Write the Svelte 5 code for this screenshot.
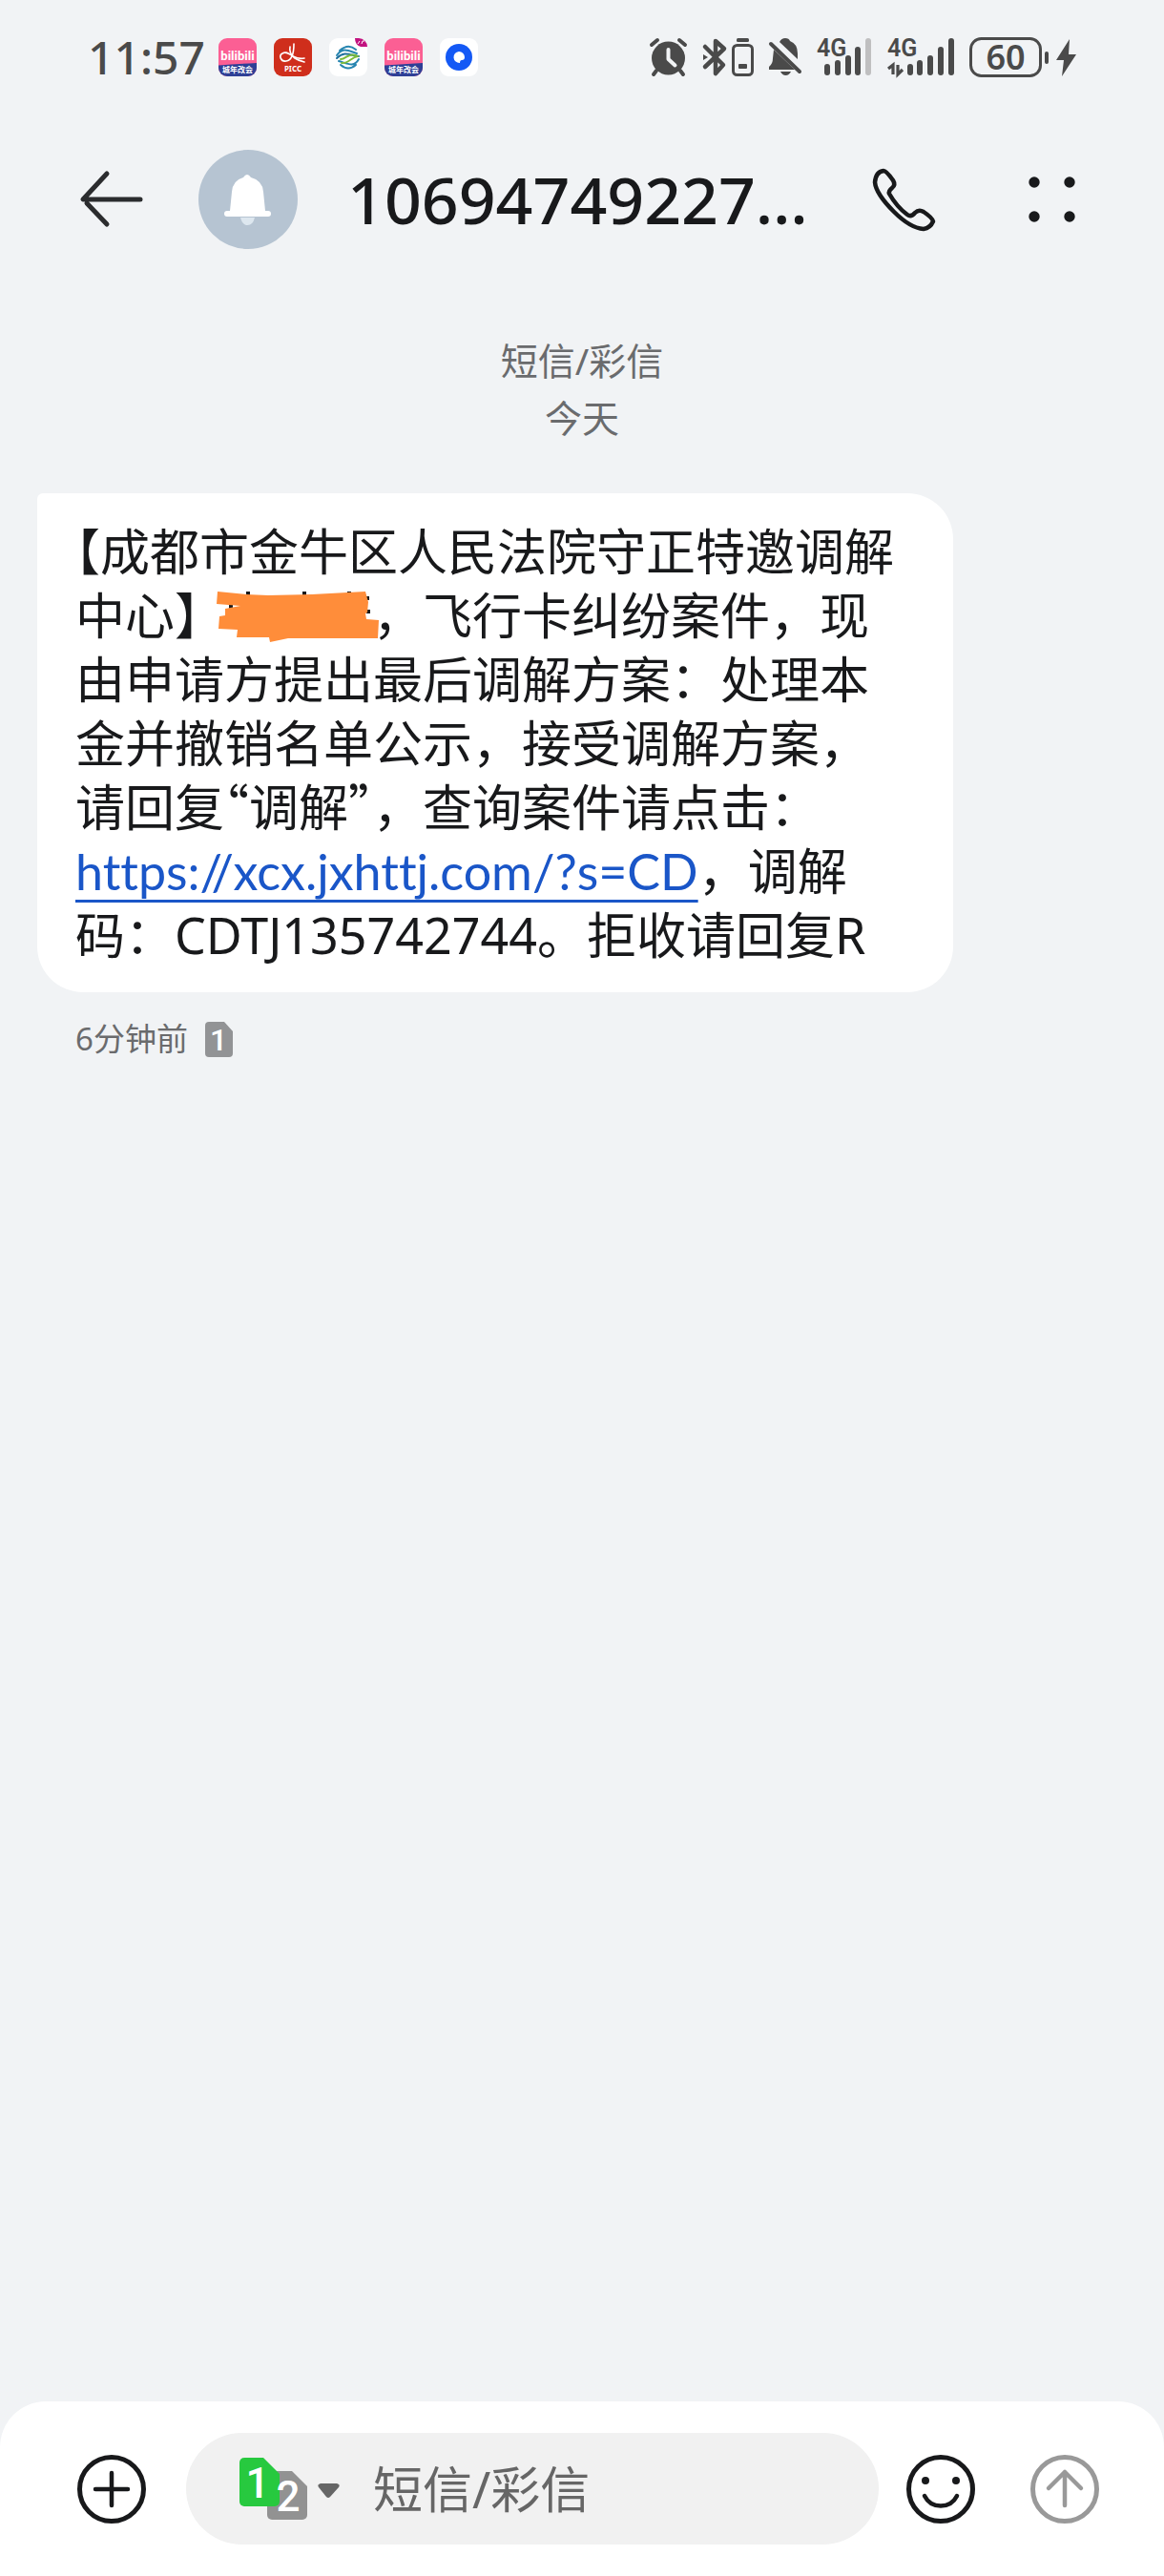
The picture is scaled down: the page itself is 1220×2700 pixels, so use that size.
<script lang="ts">
  interface SimInfo { slot: number }
  let { sender = '10694749227…', link = 'https://xcx.jxhttj.com/?s=CD' }: { sender?: string; link?: string } = $props();

  let draft = $state('');
  const sim: SimInfo = { slot: 1 };

  // left edge, height and opacity of each signal bar
  const signalA = [
    { x: 8, h: 12 }, { x: 19, h: 16 }, { x: 30, h: 21 }, { x: 40, h: 30 }, { x: 51, h: 39, off: true }
  ];
  const signalB = [
    { x: 21, h: 12 }, { x: 31, h: 16 }, { x: 42, h: 21 }, { x: 53, h: 30 }, { x: 64, h: 39 }
  ];
</script>

{#snippet bilibili()}
  <svg width="40" height="40" viewBox="0 0 40 40" aria-hidden="true">
    <rect width="40" height="40" rx="9" fill="#fb5f94" />
    <path d="M0 28.500Q20 27 40 26V31a9 9 0 0 1-9 9H9a9 9 0 0 1-9-9Z" fill="#2e3f96" />
    <text x="20" y="23" text-anchor="middle" class="brand">bilibili</text>
    <text x="20" y="36" text-anchor="middle" class="mini">城年改会</text>
  </svg>
{/snippet}

{#snippet signal(bars: { x: number; h: number; off?: boolean }[], width: number, data: boolean)}
  <svg {width} height="40" viewBox="0 0 {width} 40" aria-hidden="true">
    <text x="0" y="19" class="net">4G</text>
    {#each bars as b (b.x)}
      <rect x={b.x} y={39 - b.h} width="6" height={b.h} rx="3" fill={b.off ? '#bfbfc0' : '#4a4a4a'} />
    {/each}
    {#if data}
      <path d="M6 38V28L1 32M11 28V38L16 33" fill="none" stroke="#4a4a4a" stroke-width="3.200" />
    {/if}
  </svg>
{/snippet}

<div class="screen" lang="zh-CN">
  <div class="status">
    <span class="clock">11:57</span>
    <div class="apps">
      {@render bilibili()}
      <svg width="40" height="40" viewBox="0 0 40 40" aria-hidden="true">
        <rect width="40" height="40" rx="9" fill="#cf2e1c" />
        <g fill="none" stroke="#fff" stroke-width="1.600" stroke-linecap="round">
          <path d="M21 6c0 8-1 17-8 18-6 1-8-6-4-8 4-3 7 1 11 3 4 2 8 3 12 2" />
          <path d="M17 9c-1 5 1 9 5 12 3 2 6 3 10 4" />
        </g>
        <text x="20" y="35" text-anchor="middle" class="mini">PICC</text>
      </svg>
      <svg width="40" height="40" viewBox="0 0 40 40" aria-hidden="true">
        <rect width="40" height="40" rx="9" fill="#fff" />
        <path d="M27 0h4a9 9 0 0 1 9 9H33q-6-2-6-9Z" fill="#c2127f" />
        <path d="M30 6l2-3M34 6l1-3h2" stroke="#fff" stroke-width="1" fill="none" />
        <g fill="none" stroke-width="2" stroke-linecap="round">
          <path d="M11 13Q20 5 28 12M8 18C14 9 20 13 29 16M31 22C26 31 20 27 10 24M28 28Q20 35 12 28" stroke="#2685b0" />
          <path d="M8 21C16 13 22 18 31 19" stroke="#1e6f9c" />
          <path d="M12 22C18 22 20 15 28 18M13 26C20 27 23 20 30 19" stroke="#7cbb3c" />
        </g>
      </svg>
      {@render bilibili()}
      <svg width="40" height="40" viewBox="0 0 40 40" aria-hidden="true">
        <rect width="40" height="40" rx="9" fill="#fff" />
        <circle cx="20" cy="20" r="14" fill="#1459f5" />
        <path d="M20 14a6 6 0 1 0 1 12q0-3 2-3 3 0 3-3a6 6 0 0 0-6-6Z" fill="#fff" />
      </svg>
    </div>

    <div class="system">
      <svg width="41" height="40" viewBox="0 0 41 40" aria-hidden="true">
        <circle cx="20.500" cy="21" r="17.500" fill="#4a4a4a" />
        <path d="M3 7l6-5M38 7l-6-5M8 34l-3 4M33 34l3 4" fill="none" stroke="#4a4a4a" stroke-width="4" stroke-linecap="round" />
        <path d="M20.500 12v10l7 6.500" fill="none" stroke="#f1f3f5" stroke-width="4" stroke-linecap="round" stroke-linejoin="round" />
      </svg>
      <svg width="53" height="40" viewBox="0 0 53 40" aria-hidden="true">
        <path d="M2 9l19 19-8 9V3l9 8L2 30" fill="none" stroke="#4a4a4a" stroke-width="4.500" stroke-linecap="round" stroke-linejoin="round" />
        <path d="M0 17l5 3-5 3Z" fill="#4a4a4a" />
        <rect x="31.500" y="7.500" width="20" height="31" rx="4" fill="none" stroke="#4a4a4a" stroke-width="3" />
        <rect x="35" y="0" width="13" height="4" rx="1.500" fill="#4a4a4a" />
        <rect x="37" y="27" width="9" height="5" rx="1" fill="#4a4a4a" />
      </svg>
      <svg width="34" height="40" viewBox="0 0 34 40" aria-hidden="true">
        <path d="M11 4Q13 0 17 0q4 0 5 3 8 3 8 13v6Z" fill="#4a4a4a" />
        <path d="M5 12L27 33H0v-3q4-3 4-9Z" fill="#4a4a4a" />
        <path d="M12 35h11q-2 4-5.500 4T12 35Z" fill="#4a4a4a" />
        <path d="M2 6l30 29" stroke="#4a4a4a" stroke-width="4" stroke-linecap="round" />
      </svg>
      {@render signal(signalA, 58, false)}
      {@render signal(signalB, 70, true)}
      <svg width="112" height="44" viewBox="0 0 112 44" aria-hidden="true">
        <rect x="1.500" y="2.500" width="73" height="39" rx="11" fill="none" stroke="#4a4a4a" stroke-width="3" />
        <text x="38" y="35" text-anchor="middle" class="level">60</text>
        <rect x="79" y="16" width="4" height="13" rx="2" fill="#4a4a4a" />
        <path d="M105 3L91 25h8l-2 17 15-23h-8Z" fill="#4a4a4a" />
      </svg>
    </div>
  </div>

  <header>
    <button class="icon" aria-label="返回">
      <svg width="64" height="60" viewBox="0 0 64 60">
        <path d="M27 3L2 30H62M6 34L27 56" fill="none" stroke="#2b2c2e" stroke-width="5" stroke-linecap="round" stroke-linejoin="round" />
      </svg>
    </button>
    <svg class="avatar" width="104" height="104" viewBox="0 0 104 104" aria-hidden="true">
      <circle cx="52" cy="52" r="52" fill="#b6c4d2" />
      <path d="M44 71h15q-2 8-7.500 8T44 71Z" fill="#dde7ef" />
      <path d="M47 29q4-6 8 0 12 3 13 15l2 20h3a3 3 0 0 1 0 6H30a3 3 0 0 1 0-6h3l2-20q1-12 12-15Z" fill="#fff" />
    </svg>
    <h1>{sender}</h1>
    <button class="icon call" aria-label="拨打电话">
      <svg width="66" height="66" viewBox="0 0 66 66">
        <path d="M12 3Q15 3 22 13 25 18 21 21 17 24 18 27 26 41 37 49 41 52 45 47 49 43 54 46 63 52 64 56 61 63 54 64 40 63 23 46 4 27 3 15 4 4 12 3Z" fill="none" stroke="#18191b" stroke-width="4.500" stroke-linejoin="round" />
      </svg>
    </button>
    <button class="icon" aria-label="更多">
      <svg width="50" height="48" viewBox="0 0 50 48">
        {#each [6, 43] as x (x)}
          <circle cx={x} cy="6" r="5.700" fill="#18191b" />
          <circle cx={x} cy="42" r="5.700" fill="#18191b" />
        {/each}
      </svg>
    </button>
  </header>

  <main>
    <p class="day">短信/彩信<br />今天</p>

    <article class="bubble"><span class="half">【</span>成都市金牛区人民法院守正特邀调解中心】<span class="redacted"><svg viewBox="0 0 172 54" aria-hidden="true">
      <path d="M31 0h4v5h-4ZM90 0h4v5h-4ZM137 0h4v5h-4ZM13 13h4v5h-4ZM156 5h4v4h-4ZM157 19h4v4h-4Z" fill="#18191b" />
      <path d="M1 0L31 3 54 4 100 3 156 0 159 11 158 22 156 23 157 29 170 30 169 49H75L56 53 55 48H21L22 40 2 39 3 26 9 25V18L25 15 0 13Z" fill="#ff8d3a" />
    </svg></span>，飞行卡纠纷案件，现由申请方提出最后调解方案：处理本金并撤销名单公示，接受调解方案，请回复<span class="half">“</span>调解<span class="half">”</span>，查询案件请点击：<a href={link}>{link}</a>，调解码：CDTJ135742744。拒收请回复R</article>

    <div class="meta">
      <time>6分钟前</time>
      <svg width="29" height="37" viewBox="0 0 29 37" aria-hidden="true">
        <path d="M4 0H20L29 10V33a4 4 0 0 1-4 4H4a4 4 0 0 1-4-4V4a4 4 0 0 1 4-4Z" fill="#929395" />
        <text x="14" y="30" text-anchor="middle" class="slot">{sim.slot}</text>
      </svg>
    </div>
  </main>

  <footer>
    <button class="icon" aria-label="添加">
      <svg width="72" height="72" viewBox="0 0 72 72">
        <circle cx="36" cy="36" r="33.500" fill="none" stroke="#18191b" stroke-width="5" />
        <path d="M36 19V53M19 36H53" stroke="#18191b" stroke-width="4.500" stroke-linecap="round" />
      </svg>
    </button>
    <div class="field">
      <button class="icon" aria-label="切换SIM卡">
        <svg width="106" height="66" viewBox="0 0 106 66">
          <path d="M33 14H55L71 30V60a5 5 0 0 1-5 5H34a5 5 0 0 1-5-5V18a4 4 0 0 1 4-4Z" fill="#929292" />
          <path d="M5 0H25L42 17V46a5 5 0 0 1-5 5H5a5 5 0 0 1-5-5V5a5 5 0 0 1 5-5Z" fill="#27c93f" />
          <text x="19" y="42" text-anchor="middle" class="slot big">1</text>
          <text x="51" y="56" text-anchor="middle" class="slot big">2</text>
          <path d="M85 27h17q4 1 2 4l-9 10q-2 2-4 0l-8-10q-2-3 2-4Z" fill="#666" />
        </svg>
      </button>
      <input type="text" aria-label="短信/彩信" placeholder="短信/彩信" bind:value={draft} />
    </div>
    <button class="icon smile" aria-label="表情">
      <svg width="72" height="72" viewBox="0 0 72 72">
        <circle cx="36" cy="36" r="33.500" fill="none" stroke="#18191b" stroke-width="5" />
        <circle cx="20" cy="27" r="4" fill="#18191b" />
        <circle cx="52" cy="27" r="4" fill="#18191b" />
        <path d="M19 43C26 57 46 57 53 43" fill="none" stroke="#18191b" stroke-width="4.500" stroke-linecap="round" />
      </svg>
    </button>
    <button class="icon" aria-label="发送">
      <svg width="72" height="72" viewBox="0 0 72 72">
        <circle cx="36" cy="36" r="33.500" fill="none" stroke="#999" stroke-width="5" />
        <path d="M36 53V18M19 35L36 18 53 35" fill="none" stroke="#999" stroke-width="4.500" stroke-linecap="round" stroke-linejoin="round" />
      </svg>
    </button>
  </footer>
</div>

<style>
  :global(body) { margin: 0; background: #f1f3f5; }
  .screen { min-height: 100vh; display: flex; flex-direction: column; background: #f1f3f5; color: #18191b; font-family: 'Noto Sans', 'Noto Sans CJK SC', sans-serif; }
  svg { display: block; flex: none; overflow: visible; }

  .status { height: 120px; padding: 0 92px; display: flex; align-items: center; color: #4a4a4a; }
  .clock { font-size: 48px; font-weight: 500; line-height: 60px; width: 137px; }
  .apps { display: flex; gap: 18px; }
  .system { margin-left: auto; display: flex; align-items: center; gap: 16px; }
  .net { font-family: Roboto, sans-serif; font-size: 25px; font-weight: 600; fill: #4a4a4a; }
  .level { font-size: 36px; font-weight: 600; fill: #4a4a4a; }
  .brand { font-family: Roboto, sans-serif; font-size: 13px; font-weight: 700; fill: #fff; }
  .mini { font-size: 8px; font-weight: 700; fill: #fff; }

  .icon { border: 0; padding: 0; background: none; flex: none; cursor: pointer; }
  header { height: 178px; padding: 0 92px 0 85px; display: flex; align-items: center; }
  .avatar { margin-left: 59px; }
  h1 { flex: 1; min-width: 0; margin: 0 0 0 52px; font-size: 68px; font-weight: 500; line-height: 80px; white-space: nowrap; }
  .call { margin-right: 98px; }

  main { flex: 1; padding: 50px 39px 0; }
  .day { margin: 0 0 49px; text-align: center; font-size: 39px; line-height: 60px; color: #6a6b6d; }
  .bubble { max-width: 880px; padding: 27px 40px; background: #fff; border-radius: 6px 48px 48px 48px; font-size: 52px; line-height: 67px; }
  .bubble a { font-family: Lato, sans-serif; font-variant-ligatures: none; line-height: 0; color: #1a56c8; text-decoration: underline; text-decoration-thickness: 3px; text-underline-offset: 10px; text-decoration-skip-ink: none; }
  .half { font-family: 'Noto Sans CJK SC', sans-serif; font-feature-settings: 'halt'; line-height: 0; }
  .redacted { display: inline-block; width: 3em; height: 54px; vertical-align: -9px; }
  .redacted svg { width: 172px; height: 54px; margin-left: -8px; }
  .meta { margin: 30px 0 0 40px; display: flex; align-items: center; gap: 18px; font-size: 33px; line-height: 38px; color: #6a6b6d; }
  .slot { font-family: Roboto, sans-serif; font-size: 32px; font-weight: 500; fill: #fff; }
  .big { font-size: 44px; }

  footer { padding: 33px 68px 33px 81px; display: flex; align-items: center; background: #fff; border-radius: 48px 48px 0 0; }
  .field { flex: 1; min-width: 0; height: 117px; margin: 0 29px 0 42px; padding: 0 40px 0 56px; box-sizing: border-box; display: flex; align-items: center; gap: 34px; border-radius: 59px; background: #f1f1f1; }
  input { flex: 1; min-width: 0; padding: 0; border: 0; outline: 0; background: none; font: inherit; font-size: 52px; line-height: 67px; color: #18191b; }
  input::placeholder { color: #666; opacity: 1; }
  .smile { margin-right: 58px; }
</style>
